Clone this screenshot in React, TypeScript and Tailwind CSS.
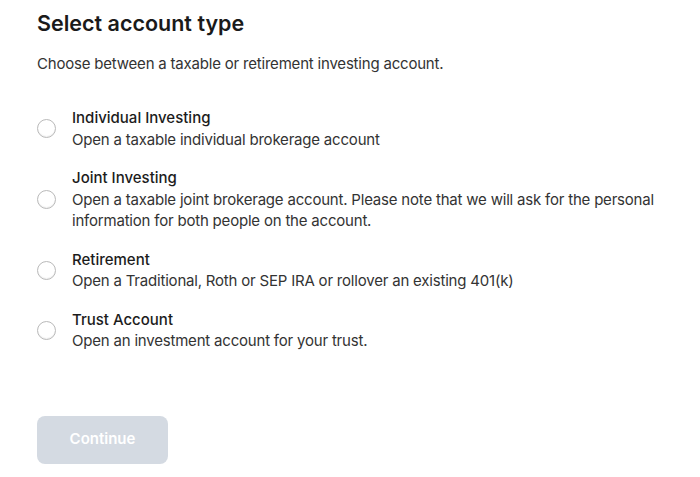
import { useState } from "react";

const options = [
  {
    id: "individual",
    title: "Individual Investing",
    description: "Open a taxable individual brokerage account",
  },
  {
    id: "joint",
    title: "Joint Investing",
    description:
      "Open a taxable joint brokerage account. Please note that we will ask for the personal information for both people on the account.",
  },
  {
    id: "retirement",
    title: "Retirement",
    description: "Open a Traditional, Roth or SEP IRA or rollover an existing 401(k)",
  },
  {
    id: "trust",
    title: "Trust Account",
    description: "Open an investment account for your trust.",
  },
];

function AccountOption({
  title,
  description,
  selected,
  onSelect,
}: {
  title: string;
  description: string;
  selected: boolean;
  onSelect: () => void;
}) {
  return (
    <label className="flex cursor-pointer items-center gap-[16px]" onClick={onSelect}>
      <span className="flex size-[19px] shrink-0 items-center justify-center rounded-full border border-[#b9b9b9] bg-white shadow-[inset_0_-1px_1px_rgba(0,0,0,0.06)]">
        {selected ? <span className="size-[9px] rounded-full bg-[#1f2937]" /> : null}
      </span>
      <span className="min-w-0 flex-1 text-[15px] leading-[21.5px]">
        <span className="block font-medium text-[#1c1c1c]">{title}</span>
        <span className="block tracking-[-0.2px] text-[#333333]">{description}</span>
      </span>
    </label>
  );
}

export default function App() {
  const [selected, setSelected] = useState<string | null>(null);

  return (
    <div
      className="min-h-[477px] w-[700px] bg-white pl-[37px] pr-[30px] pt-[9px]"
      style={{ fontFamily: "Inter, 'Noto Sans', sans-serif" }}
    >
      <h1 className="text-[21.5px] font-semibold leading-[29px] text-[#1a1a1a]">
        Select account type
      </h1>
      <p className="mt-[15px] text-[15px] leading-[21px] tracking-[-0.2px] text-[#333333]">
        Choose between a taxable or retirement investing account.
      </p>

      <div className="mt-[33px] flex flex-col gap-[17px]">
        {options.map((option) => (
          <AccountOption
            key={option.id}
            title={option.title}
            description={option.description}
            selected={selected === option.id}
            onSelect={() => setSelected(option.id)}
          />
        ))}
      </div>

      <button
        type="button"
        disabled={selected === null}
        className="mt-[64px] h-[48px] w-[131px] rounded-[8px] bg-[#d4dae2] text-[15px] font-semibold text-white disabled:cursor-not-allowed"
      >
        Continue
      </button>
    </div>
  );
}
